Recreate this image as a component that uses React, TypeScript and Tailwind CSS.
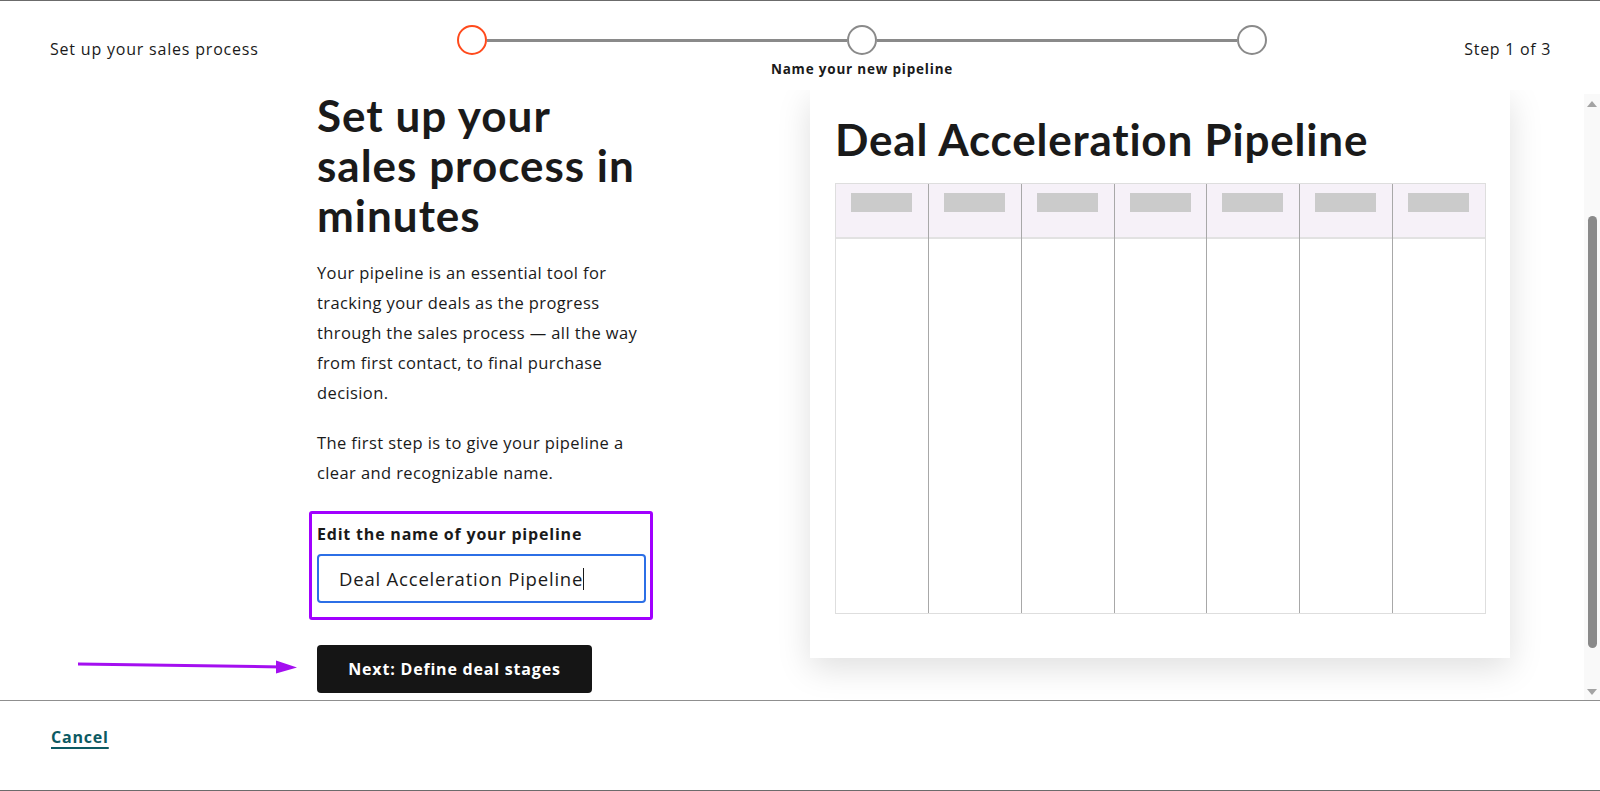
import React from "react"

const body = { fontFamily: "'Open Sans', 'Noto Sans', sans-serif" }
const display = { fontFamily: "Lato, 'Liberation Sans', sans-serif" }

function Stepper() {
  return (
    <div className="w-[810px] pt-[24px]">
      <div className="flex items-center">
        <div className="h-[30px] w-[30px] rounded-full border-2 border-[#ff4a1c] bg-white" />
        <div className="h-[3px] flex-1 bg-[#8a8a8a]" />
        <div className="h-[30px] w-[30px] rounded-full border-2 border-[#8a8a8a] bg-white" />
        <div className="h-[3px] flex-1 bg-[#8a8a8a]" />
        <div className="h-[30px] w-[30px] rounded-full border-2 border-[#8a8a8a] bg-white" />
      </div>
      <div className="mt-[5px] text-center text-[13.5px] font-bold leading-[18px] tracking-[0.8px] text-[#1a1a1a]">
        Name your new pipeline
      </div>
    </div>
  )
}

function PipelineTable() {
  const cols = [0, 1, 2, 3, 4, 5, 6]
  return (
    <div className="flex w-[651px] border border-[#dedede]">
      {cols.map((c) => (
        <div
          key={c}
          className={
            c === 0
              ? "flex h-[429px] flex-1 flex-col"
              : "flex h-[429px] flex-1 flex-col border-l border-[#a8a8a8]"
          }
        >
          <div className="h-[55px] border-b-2 border-[#e2e2e2] bg-[#f6f1f8] pl-[15px] pt-[9px]">
            <div className="h-[19px] w-[61px] bg-[#cbcbcb]" />
          </div>
          <div className="flex-1 bg-white" />
        </div>
      ))}
    </div>
  )
}

function FakeScrollbar() {
  return (
    <div className="mt-[4px] flex w-[16px] flex-col items-center bg-[#f9f9f9]">
      <div className="mt-[7px] h-0 w-0 border-x-[5px] border-b-[6px] border-x-transparent border-b-[#a3a3a3]" />
      <div className="mt-[109px] h-[432px] w-[9px] rounded-full bg-[#8a8a8a]" />
      <div className="mt-auto mb-[5px] h-0 w-0 border-x-[5px] border-t-[6px] border-x-transparent border-t-[#a3a3a3]" />
    </div>
  )
}

export default function App() {
  return (
    <div
      className="flex h-[791px] w-[1600px] flex-col overflow-hidden border-y border-[#6b6b6b] bg-white text-[#1a1a1a]"
      style={body}
    >
      {/* header */}
      <header className="flex h-[89px] shrink-0">
        <div className="w-[457px] pl-[50px] pt-[37px] text-[16px] leading-[22px] tracking-[0.8px]">
          Set up your sales process
        </div>
        <Stepper />
        <div className="flex-1 pr-[49px] pt-[37px] text-right text-[16px] leading-[22px] tracking-[0.7px]">
          Step 1 of 3
        </div>
      </header>

      {/* scroll area */}
      <main className="flex h-[611px] shrink-0 overflow-hidden border-b border-[#8f8f8f]">
        <div className="flex flex-1 pl-[317px]">
          <div className="w-[330px]">
            <h1
              className="w-[326px] text-[44px] font-bold leading-[50px] tracking-[1px]"
              style={display}
            >
              Set up your sales process in minutes
            </h1>
            <p className="mt-[18px] text-[16.5px] leading-[30px] tracking-[0.4px]">
              Your pipeline is an essential tool for tracking your deals as the progress through the
              sales process — all the way from first contact, to final purchase decision.
            </p>
            <p className="mt-[20px] text-[16.5px] leading-[30px] tracking-[0.4px]">
              The first step is to give your pipeline a clear and recognizable name.
            </p>
            <div className="-ml-[8px] mt-[23px] w-[344px] rounded-[3px] border-[3px] border-[#a100ff] pb-[14px] pl-[5px] pr-[4px] pt-[10px]">
              <div className="text-[16px] font-bold leading-[20px] tracking-[0.8px]">
                Edit the name of your pipeline
              </div>
              <div className="mt-[10px] flex h-[49px] items-center rounded-[4px] border-2 border-[#2c6fe6] pl-[20px] text-[18.5px] tracking-[0.8px]">
                <span>Deal Acceleration Pipeline</span>
                <span className="h-[22px] w-[1px] bg-[#1a1a1a]" />
              </div>
            </div>
            <div className="relative mt-[25px]">
              <svg
                className="absolute left-[-239px] top-[14px]"
                width="220"
                height="16"
                viewBox="0 0 220 16"
              >
                <line x1="0" y1="5" x2="204" y2="8" stroke="#a40ff0" strokeWidth="3" />
                <polygon points="198,1.5 219,8.5 198,14.5" fill="#a40ff0" />
              </svg>
              <button className="h-[48px] w-[275px] rounded-[4px] bg-[#151515] text-[16px] font-bold tracking-[0.8px] text-white">
                Next: Define deal stages
              </button>
            </div>
          </div>

          <div className="ml-[163px] h-[568px] w-[700px] bg-white pl-[25px] pt-[25px] shadow-[0_10px_32px_rgba(0,0,0,0.13)]">
            <h2
              className="text-[44px] font-bold leading-[48px] tracking-[0.8px]"
              style={display}
            >
              Deal Acceleration Pipeline
            </h2>
            <div className="mt-[20px]">
              <PipelineTable />
            </div>
          </div>
        </div>
        <FakeScrollbar />
      </main>

      {/* footer */}
      <footer className="flex flex-1 items-start pl-[51px] pt-[24px]">
        <a className="text-[16px] font-bold leading-[24px] tracking-[0.8px] text-[#0b5a63] underline decoration-2 underline-offset-[4px]">
          Cancel
        </a>
      </footer>
    </div>
  )
}
